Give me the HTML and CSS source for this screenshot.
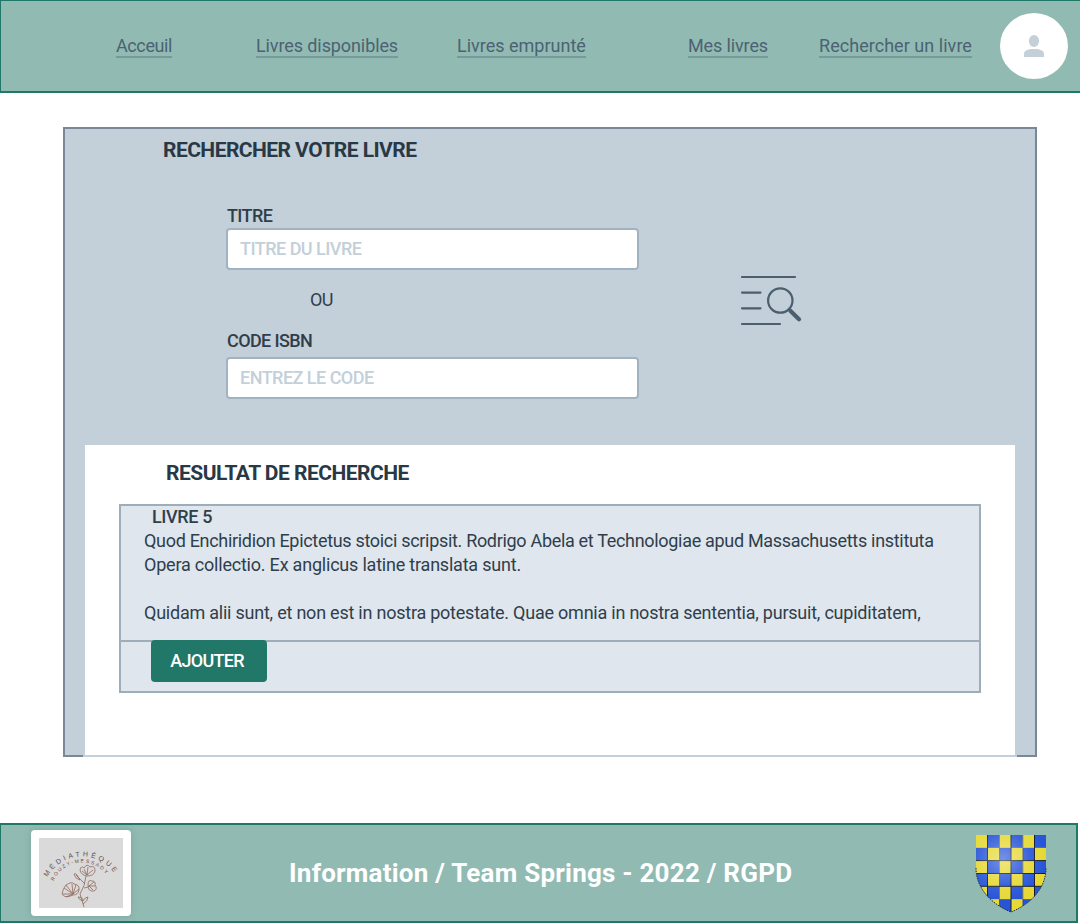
FILE: index.html
```html
<!DOCTYPE html>
<html lang="fr">
<head>
<meta charset="utf-8">
<title>Rechercher un livre</title>
<link rel="stylesheet" href="styles.css">
</head>
<body>
<header class="header">
  <nav class="nav">
    <a class="link link-home">Acceuil</a>
    <a class="link link-available">Livres disponibles</a>
    <a class="link link-borrowed">Livres emprunté</a>
    <a class="link link-mine">Mes livres</a>
    <a class="link link-search">Rechercher un livre</a>
  </nav>
  <div class="avatar">
    <svg width="20" height="22" viewBox="0 0 20 22"><ellipse cx="10" cy="6" rx="5.1" ry="6"/><path d="M0 22v-3c0-3 3-5 10-5s10 2 10 5v3z"/></svg>
  </div>
</header>

<main class="panel">
  <h1 class="title">RECHERCHER VOTRE LIVRE</h1>
  <div class="search">
    <form class="form">
      <label class="label" for="titre">TITRE</label>
      <input class="input input-title" id="titre" placeholder="TITRE DU LIVRE">
      <p class="or">OU</p>
      <label class="label label-code" for="isbn">CODE ISBN</label>
      <input class="input input-code" id="isbn" placeholder="ENTREZ LE CODE">
    </form>
    <svg class="search-icon" width="62" height="52" viewBox="0 0 62 52">
      <path d="M2 2h53M2 17.6h18.500M2 33.300h18.500M2 49h38"/>
      <circle cx="40.300" cy="25.500" r="12.200"/>
      <path class="handle" d="M49 34.500l1.500 1.500"/>
      <path class="grip" d="M50.300 35.800l8.700 8.400"/>
    </svg>
  </div>

  <section class="results">
    <h2 class="title title-results">RESULTAT DE RECHERCHE</h2>
    <article class="book">
      <div class="book-info">
        <h3 class="book-title">LIVRE 5</h3>
        <p class="line line-first">Quod Enchiridion Epictetus stoici scripsit. Rodrigo Abela et Technologiae apud Massachusetts instituta</p>
        <p class="line line-second">Opera collectio. Ex anglicus latine translata sunt.</p>
        <p class="line line-third">Quidam alii sunt, et non est in nostra potestate. Quae omnia in nostra sententia, pursuit, cupiditatem,</p>
      </div>
      <div class="book-actions"><button class="button">AJOUTER</button></div>
    </article>
  </section>
</main>

<footer class="footer">
  <div class="logo">
    <svg width="84" height="70" viewBox="0 0 84 70">
      <defs>
        <path id="arc-outer" d="M8.500 39A39.500 39.500 0 0 1 76 36"/>
        <path id="arc-inner" d="M14.500 43A31 31 0 0 1 69 39"/>
      </defs>
      <text class="logo-name"><textPath href="#arc-outer" textLength="79">MÉDIATHÈQUE</textPath></text>
      <text class="logo-sub"><textPath href="#arc-inner" textLength="63">ROUZY-MESSADY</textPath></text>
      <g class="flower">
        <path d="M47 38Q46 48 41 56L45 69M46 46L37 37M35 36q2-1 3 1l3 5q-5-1-6-6M45 50q4 0 6-3"/>
        <path d="M41 32q1-5 4-2 3-5 6-1 5-2 5 4-1 5-8 5-6-1-7-6M43 33l5 4 1-8M48 37l6-5M45 31l3 6"/>
        <path d="M34 57q-8 4-11-1 1-6 4-9 6-4 8-1 6 1 5 6-1 5-6 5M34 56l-9-6M34 56l-7-9M34 56l-1-10M34 56l3-9M34 56l-10 0M34 56l6-5M34 56l-7 3"/>
        <path d="M49 47q0-6 4-4 4 0 3 4 3 4-1 6-6 1-6-6M50 48l5-4M50 48l6 0M50 48l4 4"/>
        <path d="M44 63q-4-1-5-4 5 0 5 4 2-4 5-4 0 4-5 7"/>
      </g>
    </svg>
  </div>
  <p class="credits">Information / Team Springs - 2022 / RGPD</p>
  <svg class="shield" width="70" height="77" viewBox="0 0 70 77">
    <defs>
      <clipPath id="outline"><path d="M0 0h70v33c0 20-15 36-35 44C15 69 0 53 0 33z"/></clipPath>
      <pattern id="checks" width="23.333" height="25.667" patternUnits="userSpaceOnUse">
        <rect width="23.333" height="25.667" fill="#2855d8"/>
        <path fill="#e6d936" d="M0 0h11.667v12.833H0zM11.667 12.833h11.667v12.833H11.667z"/>
      </pattern>
      <radialGradient id="shine" cx="27" cy="24" r="42" gradientUnits="userSpaceOnUse">
        <stop offset="0" stop-color="#fff" stop-opacity=".36"/>
        <stop offset=".65" stop-color="#fff" stop-opacity=".08"/>
        <stop offset="1" stop-color="#fff" stop-opacity="0"/>
      </radialGradient>
    </defs>
    <g clip-path="url(#outline)">
      <rect width="70" height="77" fill="url(#checks)"/>
      <path d="M11.500 0v77M35 0v77M58.500 0v77M0 25.600h70M0 38.500h70M0 51.300h70" stroke="#161d30" fill="none"/>
      <path d="M23.500 0v77M47 0v77" stroke="#161d30" stroke-opacity=".35" fill="none"/>
      <rect width="70" height="77" fill="url(#shine)"/>
    </g>
    <path d="M0 33c0 20 15 36 35 44C55 69 70 53 70 33" fill="none" stroke="#222c35" stroke-dasharray="1.500 1"/>
  </svg>
</footer>
</body>
</html>
```

FILE: styles.css
```css
* { box-sizing: border-box; }
body {
  margin: 0;
  background: #fff;
  color: #2f3e4b;
  font: 18px/24px Roboto, "Open Sans", sans-serif;
}
h1, h2, h3, p { margin: 0; }

.header {
  display: flex;
  height: 93px;
  background: #91bbb2;
  border: solid #1f7868;
  border-width: 1px 0 2px 1px;
}
.nav {
  display: flex;
  align-items: flex-start;
  width: 999px;
  padding: 33px 0 0 115px;
}
.link {
  height: 24px;
  border-bottom: 2px solid #77999a;
  color: #4c6272;
  white-space: nowrap;
}
.link-home { width: 56px; margin-right: 84px; letter-spacing: -.4px; }
.link-available { width: 142px; margin-right: 59px; letter-spacing: -.1px; }
.link-borrowed { width: 129px; margin-right: 102px; }
.link-mine { width: 80px; margin-right: 51px; letter-spacing: -.125px; }
.link-search { width: 153px; letter-spacing: .04px; }
.avatar {
  display: flex;
  align-items: center;
  justify-content: center;
  width: 68px;
  height: 66px;
  margin-top: 12px;
  border-radius: 50%;
  background: #fff;
}
.avatar svg { fill: #c3cfd9; }

.panel {
  width: 974px;
  height: 630px;
  margin: 34px 0 0 63px;
  padding: 9px 18px 0;
  border: 2px solid #788896;
  background: #c3cfd9;
}
.title {
  padding-left: 80px;
  color: #293845;
  font-size: 21px;
  font-weight: 700;
  line-height: 24px;
  letter-spacing: -.55px;
}
.search { display: flex; height: 281px; }
.form {
  display: flex;
  flex-direction: column;
  width: 413px;
  margin: 42px 0 0 143px;
}
.label {
  padding-left: 1px;
  font-weight: 500;
  letter-spacing: -.6px;
}
.label-code { margin-top: 17px; }
.input {
  height: 42px;
  padding: 0 12px 2px;
  border: 2px solid #a1b2c1;
  border-radius: 4px;
  background: #fff;
  font: 500 18px/24px Roboto, sans-serif;
  letter-spacing: -.52px;
}
.input::placeholder { color: #c3cfd9; opacity: 1; }
.input-code { margin-top: 4px; }
.or { margin: 18px 0 0 84px; letter-spacing: -.6px; }
.search-icon {
  margin: 113px 0 0 101px;
  fill: none;
  stroke: #4b5f6e;
  stroke-width: 2.2;
  stroke-linecap: round;
}
.grip { stroke-width: 4.2; }

.results {
  height: 314px;
  border: 2px solid #c3cfd9;
  padding: 16px 34px 0;
  background: #fff;
}
.title-results { padding-left: 47px; letter-spacing: -.52px; }
.book {
  height: 189px;
  margin-top: 19px;
  border: 2px solid #9eadba;
  background: #dfe6ee;
}
.book-info {
  height: 136px;
  padding-left: 23px;
  border-bottom: 2px solid #9eadba;
}
.book-title {
  height: 23px;
  padding-left: 8px;
  font-size: 18px;
  font-weight: 500;
  line-height: 22px;
  letter-spacing: -.37px;
}
.line { white-space: nowrap; }
.line-first { letter-spacing: -.312px; }
.line-second { letter-spacing: -.21px; }
.line-third { margin-top: 24px; letter-spacing: -.23px; }
.book-actions { padding-left: 30px; }
.button {
  display: block;
  position: relative;
  top: -2px;
  width: 116px;
  height: 42px;
  padding: 0 4px 0 0;
  border: 0;
  border-radius: 4px;
  background: #217868;
  color: #fff;
  font: 500 18px/24px Roboto, sans-serif;
  letter-spacing: -.7px;
}

.footer {
  display: flex;
  width: 1078px;
  height: 100px;
  margin-top: 66px;
  border: 2px solid #1f7868;
  border-left-width: 1px;
  background: #91bbb2;
}
.logo {
  width: 100px;
  height: 86px;
  margin: 5px 0 0 30px;
  padding: 8px;
  border-radius: 4px;
  background: #fff;
  box-shadow: 0 0 6px rgba(70, 110, 105, .3);
}
.logo svg { display: block; background: #dadada; }
.logo-name, .logo-sub {
  fill: #654e49;
  font-family: "Liberation Sans", sans-serif;
  font-size: 7px;
}
.logo-sub { font-size: 5px; }
.flower { fill: none; stroke: #91685c; stroke-width: .8; }
.credits {
  width: 687px;
  margin-top: 32px;
  padding-left: 158px;
  color: #fff;
  font-size: 26px;
  font-weight: 700;
  line-height: 32px;
  letter-spacing: .23px;
  white-space: nowrap;
}
.shield { margin: 10px 0 0 158px; overflow: visible; }
```
